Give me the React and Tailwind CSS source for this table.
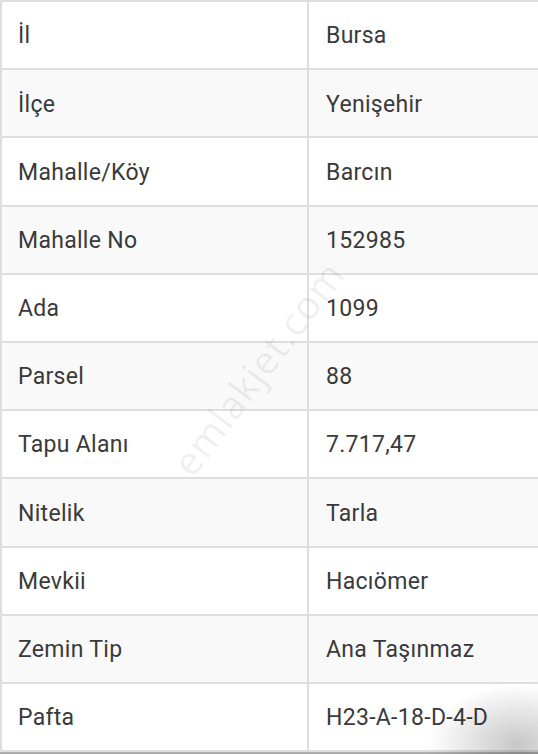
import React from 'react';

const rows = [
  ['İl', 'Bursa'],
  ['İlçe', 'Yenişehir'],
  ['Mahalle/Köy', 'Barcın'],
  ['Mahalle No', '152985'],
  ['Ada', '1099'],
  ['Parsel', '88'],
  ['Tapu Alanı', '7.717,47'],
  ['Nitelik', 'Tarla'],
  ['Mevkii', 'Hacıömer'],
  ['Zemin Tip', 'Ana Taşınmaz'],
  ['Pafta', 'H23-A-18-D-4-D'],
];

export default function App() {
  return (
    <div className="relative w-[538px] h-[754px] overflow-hidden bg-white font-['Roboto',sans-serif]">
      {/* Table */}
      <div className="border-l-2 border-b-2 border-[#dedede]">
        {rows.map(([label, value], i) => (
          <div
            key={label}
            className={`flex h-[68.2px] border-t-2 border-[#dedede] ${i % 2 === 1 ? 'bg-[#f9f9f9]' : 'bg-white'}`}
          >
            <div className="w-[307px] shrink-0 flex items-center pl-4 pt-[3px] border-r-2 border-[#dedede] text-[23px] tracking-[0.3px] text-[#3a3a3a]">
              {label}
            </div>
            <div className="flex-1 flex items-center pl-[17px] pt-[3px] text-[23px] tracking-[0.3px] text-[#3a3a3a]">
              {value}
            </div>
          </div>
        ))}
      </div>
      <div className="h-[4px] bg-gradient-to-b from-[#b5b5b5] to-[#8e8e8e]" />

      {/* Watermark */}
      <div className="pointer-events-none absolute left-[258px] top-[368px] -translate-x-1/2 -translate-y-1/2 -rotate-[53deg] text-[39px] text-[#000]/[0.07] font-['Open_Sans',sans-serif] tracking-wide whitespace-nowrap">
        emlakjet.com
      </div>

      {/* Page curl shading */}
      <div className="pointer-events-none absolute right-[-70px] bottom-[-50px] w-[180px] h-[120px] rounded-full bg-[radial-gradient(closest-side,rgba(0,0,0,0.22),rgba(0,0,0,0))]" />
    </div>
  );
}
